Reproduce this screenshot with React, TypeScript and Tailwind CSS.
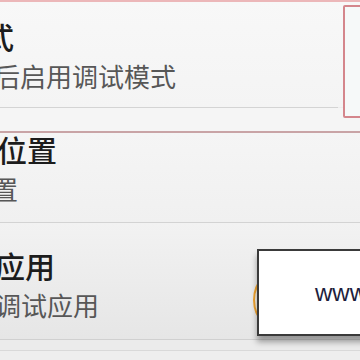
const cjk = "font-['Noto_Sans_CJK_SC','Noto_Sans',sans-serif]";

function Row({
    title,
    summary,
    titleEnd,
    summaryEnd,
    className,
    gap,
}: {
    title: string;
    summary: string;
    titleEnd: string;
    summaryEnd: string;
    className: string;
    gap: string;
}) {
    return (
        <div className={`flex flex-col ${className}`}>
            <div className={`flex justify-end whitespace-nowrap text-[30px] leading-[36px] font-medium text-[#1c1c1c] ${titleEnd}`}>
                <span>{title}</span>
            </div>
            <div className={`flex justify-end whitespace-nowrap text-[26px] leading-[32px] text-[#575757] ${summaryEnd} ${gap}`}>
                <span>{summary}</span>
            </div>
        </div>
    );
}

export default function App() {
    return (
        <div className={`relative h-[360px] w-[360px] overflow-hidden bg-[#eeeeee] ${cjk}`}>
            <div className="h-[2px] bg-[#ecb7b9]" />
            <Row
                title="调试模式"
                summary="连接后启用调试模式"
                titleEnd="w-[14px]"
                summaryEnd="w-[176px]"
                gap="mt-[6px]"
                className="h-[105px] bg-linear-to-b from-[#f8f8f8] to-[#f4f4f4] pt-[16px]"
            />
            <div className="h-px w-[338px] bg-[#d4d4d4]" />
            <div className="h-[23px] bg-[#f5f5f5]" />
            <div className="h-[2px] bg-[#c9a4a6]" />
            <Row
                title="允许模拟位置"
                summary="允许模拟位置"
                titleEnd="w-[57px]"
                summaryEnd="w-[18px]"
                gap="mt-[8px]"
                className="h-[89px] bg-linear-to-b from-[#f5f5f5] to-[#f0f0f0] [&>div:first-child]:leading-[32px]"
            />
            <div className="h-px bg-[#d3d3d3]" />
            <Row
                title="选择调试应用"
                summary="未设置调试应用"
                titleEnd="w-[55px]"
                summaryEnd="w-[99px]"
                gap="mt-[6px]"
                className="h-[116px] bg-linear-to-b from-[#f2f2f2] to-[#e6e6e6] pt-[24px]"
            />
            <div className="h-px bg-[#d0d0d0]" />
            <div className="h-[10px] bg-[#ebebeb]" />
            <div className="h-px bg-[#d9d9d9]" />

            {/* checkbox highlight */}
            <div className="absolute left-[343px] top-[5px] h-[113px] w-[30px] rounded-[2px] border-2 border-[#d4868c] bg-[#f6f9f9]" />

            {/* icon peeking out behind the watermark */}
            <div className="absolute left-[253px] top-[265px] h-[70px] w-[70px] rounded-full border-2 border-[#f0a430] bg-[#f4f0e6]" />

            {/* watermark */}
            <div className="absolute left-[257px] top-[249px] flex h-[87px] w-[120px] items-center border-2 border-[#3a3a3a] bg-white pl-[56px] shadow-[0_6px_6px_rgba(0,0,0,0.35)]">
                <span className="font-['Liberation_Sans',sans-serif] text-[24px] leading-none text-[#1e1e3c]">www</span>
            </div>
        </div>
    );
}
